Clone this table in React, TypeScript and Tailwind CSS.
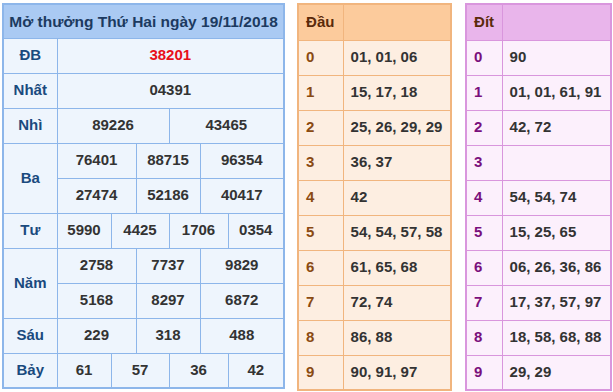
import * as React from "react";

const giai: { label: string; cells: { v: string; span: number; red?: boolean }[][] }[] = [
  { label: "ĐB", cells: [[{ v: "38201", span: 6, red: true }]] },
  { label: "Nhất", cells: [[{ v: "04391", span: 6 }]] },
  { label: "Nhì", cells: [[{ v: "89226", span: 3 }, { v: "43465", span: 3 }]] },
  {
    label: "Ba",
    cells: [
      [{ v: "76401", span: 2 }, { v: "88715", span: 2 }, { v: "96354", span: 2 }],
      [{ v: "27474", span: 2 }, { v: "52186", span: 2 }, { v: "40417", span: 2 }],
    ],
  },
  {
    label: "Tư",
    cells: [[{ v: "5990", span: 1 }, { v: "4425", span: 2 }, { v: "1706", span: 2 }, { v: "0354", span: 1 }]],
  },
  {
    label: "Năm",
    cells: [
      [{ v: "2758", span: 2 }, { v: "7737", span: 2 }, { v: "9829", span: 2 }],
      [{ v: "5168", span: 2 }, { v: "8297", span: 2 }, { v: "6872", span: 2 }],
    ],
  },
  { label: "Sáu", cells: [[{ v: "229", span: 2 }, { v: "318", span: 2 }, { v: "488", span: 2 }]] },
  {
    label: "Bảy",
    cells: [[{ v: "61", span: 1 }, { v: "57", span: 2 }, { v: "36", span: 2 }, { v: "42", span: 1 }]],
  },
];

const dau = ["01, 01, 06", "15, 17, 18", "25, 26, 29, 29", "36, 37", "42", "54, 54, 57, 58", "61, 65, 68", "72, 74", "86, 88", "90, 91, 97"];
const dit = ["90", "01, 01, 61, 91", "42, 72", "", "54, 54, 74", "15, 25, 65", "06, 26, 36, 86", "17, 37, 57, 97", "18, 58, 68, 88", "29, 29"];

function KetQua() {
  return (
    <table className="border-collapse border-2 border-[#8db6ea] bg-[#eef5fd] w-[283px] table-fixed">
      <colgroup>
        <col className="w-[54px]" />
        <col className="w-[54px]" />
        <col className="w-[25px]" />
        <col className="w-[33px]" />
        <col className="w-[31px]" />
        <col className="w-[28px]" />
        <col className="w-[56px]" />
      </colgroup>
      <tbody>
        <tr>
          <td colSpan={7} className="h-[34px] bg-[#aacaf3] border border-[#8db6ea] text-center text-[15.5px] font-bold text-[#1c3a60]">
            Mở thưởng Thứ Hai ngày 19/11/2018
          </td>
        </tr>
        {giai.map((g) =>
          g.cells.map((row, i) => (
            <tr key={g.label + i}>
              {i === 0 && (
                <td rowSpan={g.cells.length} className="border border-[#8db6ea] text-center font-bold text-[#1a4a7e]">
                  {g.label}
                </td>
              )}
              {row.map((c, j) => (
                <td
                  key={j}
                  colSpan={c.span}
                  className={`h-[35px] border border-[#8db6ea] text-center font-bold ${c.red ? "text-[#e8101a]" : "text-[#333]"}`}
                >
                  {c.v}
                </td>
              ))}
            </tr>
          )),
        )}
      </tbody>
    </table>
  );
}

function LoTo({
  title,
  rows,
  width,
  labelW,
  tone,
}: {
  title: string;
  rows: string[];
  width: string;
  labelW: string;
  tone: "cam" | "tim";
}) {
  const cam = tone === "cam";
  const bd = cam ? "border-[#f1b57e]" : "border-[#d996dd]";
  return (
    <table className={`border-collapse border-2 ${bd} ${cam ? "bg-[#fdeee1]" : "bg-[#fcf0fc]"} ${width} table-fixed`}>
      <colgroup>
        <col className={labelW} />
        <col />
      </colgroup>
      <tbody>
        <tr className={cam ? "bg-[#fccb9c]" : "bg-[#e9b5eb]"}>
          <td className={`h-[36px] border ${bd} pl-[7px] font-bold text-[#5a2a0a]`}>{title}</td>
          <td className={`border ${bd}`} />
        </tr>
        {rows.map((r, i) => (
          <tr key={i}>
            <td className={`h-[35px] border ${bd} pl-[7px] font-bold ${cam ? "text-[#8a4a12]" : "text-[#7a0f7c]"}`}>{i}</td>
            <td className={`border ${bd} pl-[7px] font-bold text-[#333] whitespace-nowrap`}>{r}</td>
          </tr>
        ))}
      </tbody>
    </table>
  );
}

export default function App() {
  return (
    <div className="w-[613px] h-[392px] bg-white font-['Liberation_Sans',Arial,sans-serif] text-[15px] flex items-start pt-[3px] pl-[2px]">
      <KetQua />
      <div className="ml-[12px]">
        <LoTo title="Đầu" rows={dau} width="w-[155px]" labelW="w-[45px]" tone="cam" />
      </div>
      <div className="ml-[13px]">
        <LoTo title="Đít" rows={dit} width="w-[147px]" labelW="w-[36px]" tone="tim" />
      </div>
    </div>
  );
}
